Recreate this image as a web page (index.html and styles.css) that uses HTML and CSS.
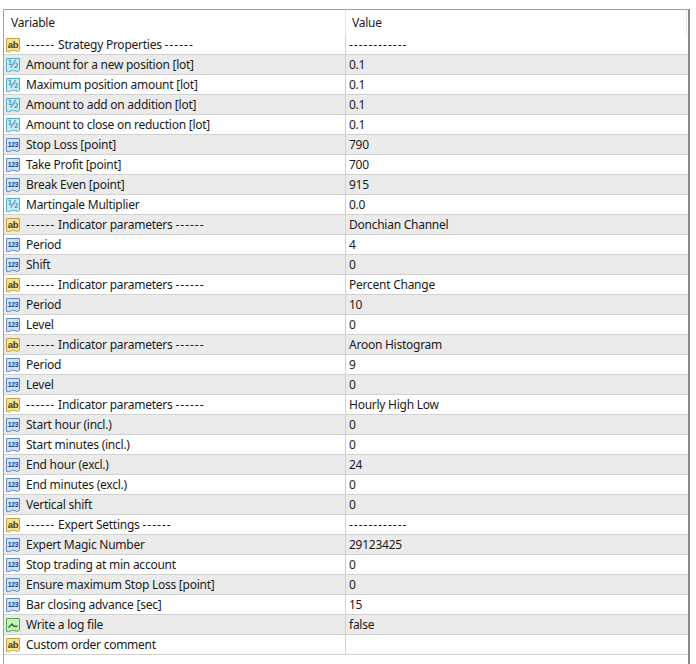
FILE: index.html
```html
<!DOCTYPE html>
<html>
<head>
<meta charset="utf-8">
<link rel="stylesheet" href="styles.css">
</head>
<body>
<svg class="defs" width="0" height="0" aria-hidden="true">
  <defs>
    <path id="shape" d="M1.5 1.5 H14.5 V13.2 Q12.5 15.2 10 13.8 Q7.5 12.4 5 14.2 Q3.2 15.4 1.5 14.3 Z"/>
    <symbol id="i-ab" viewBox="0 0 16 16">
      <use href="#shape" fill="#f7e39a" stroke="#c2a445" stroke-width="1"/>
      <text x="8" y="11" text-anchor="middle" font-family="Liberation Sans, sans-serif" font-size="9.5" font-weight="bold" fill="#4a3a10">ab</text>
    </symbol>
    <symbol id="i-half" viewBox="0 0 16 16">
      <use href="#shape" fill="#c6ecf6" stroke="#52acc8" stroke-width="1"/>
      <text x="8" y="11.4" text-anchor="middle" font-family="DejaVu Sans, sans-serif" font-size="11" fill="#1769a8">½</text>
    </symbol>
    <symbol id="i-num" viewBox="0 0 16 16">
      <use href="#shape" fill="#d2e2f6" stroke="#5c86c4" stroke-width="1"/>
      <text x="8" y="10.3" text-anchor="middle" font-family="Liberation Sans, sans-serif" font-size="6.8" font-weight="bold" fill="#1c3f85">123</text>
    </symbol>
    <symbol id="i-bool" viewBox="0 0 16 16">
      <use href="#shape" fill="#c9efc0" stroke="#52a548" stroke-width="1"/>
      <path d="M3.5 10.5 L7 7 L9 9.2 L12.5 9.2" fill="none" stroke="#23702a" stroke-width="1.4"/>
    </symbol>
  </defs>
</svg>
<div class="grid">
  <div class="head">
    <div class="hcell var">Variable</div>
    <div class="hcell val">Value</div>
  </div>
  <div class="row"><div class="cell var"><svg class="ic"><use href="#i-ab"/></svg><span class="dash">------</span>&nbsp;Strategy Properties&nbsp;<span class="dash">------</span></div><div class="cell val"><span class="dash">------------</span></div></div>
  <div class="row alt"><div class="cell var"><svg class="ic"><use href="#i-half"/></svg>Amount for a new position [lot]</div><div class="cell val">0.1</div></div>
  <div class="row"><div class="cell var"><svg class="ic"><use href="#i-half"/></svg>Maximum position amount [lot]</div><div class="cell val">0.1</div></div>
  <div class="row alt"><div class="cell var"><svg class="ic"><use href="#i-half"/></svg>Amount to add on addition [lot]</div><div class="cell val">0.1</div></div>
  <div class="row"><div class="cell var"><svg class="ic"><use href="#i-half"/></svg>Amount to close on reduction [lot]</div><div class="cell val">0.1</div></div>
  <div class="row alt"><div class="cell var"><svg class="ic"><use href="#i-num"/></svg>Stop Loss [point]</div><div class="cell val">790</div></div>
  <div class="row"><div class="cell var"><svg class="ic"><use href="#i-num"/></svg>Take Profit [point]</div><div class="cell val">700</div></div>
  <div class="row alt"><div class="cell var"><svg class="ic"><use href="#i-num"/></svg>Break Even [point]</div><div class="cell val">915</div></div>
  <div class="row"><div class="cell var"><svg class="ic"><use href="#i-half"/></svg>Martingale Multiplier</div><div class="cell val">0.0</div></div>
  <div class="row alt"><div class="cell var"><svg class="ic"><use href="#i-ab"/></svg><span class="dash">------</span>&nbsp;Indicator parameters&nbsp;<span class="dash">------</span></div><div class="cell val">Donchian Channel</div></div>
  <div class="row"><div class="cell var"><svg class="ic"><use href="#i-num"/></svg>Period</div><div class="cell val">4</div></div>
  <div class="row alt"><div class="cell var"><svg class="ic"><use href="#i-num"/></svg>Shift</div><div class="cell val">0</div></div>
  <div class="row"><div class="cell var"><svg class="ic"><use href="#i-ab"/></svg><span class="dash">------</span>&nbsp;Indicator parameters&nbsp;<span class="dash">------</span></div><div class="cell val">Percent Change</div></div>
  <div class="row alt"><div class="cell var"><svg class="ic"><use href="#i-num"/></svg>Period</div><div class="cell val">10</div></div>
  <div class="row"><div class="cell var"><svg class="ic"><use href="#i-num"/></svg>Level</div><div class="cell val">0</div></div>
  <div class="row alt"><div class="cell var"><svg class="ic"><use href="#i-ab"/></svg><span class="dash">------</span>&nbsp;Indicator parameters&nbsp;<span class="dash">------</span></div><div class="cell val">Aroon Histogram</div></div>
  <div class="row"><div class="cell var"><svg class="ic"><use href="#i-num"/></svg>Period</div><div class="cell val">9</div></div>
  <div class="row alt"><div class="cell var"><svg class="ic"><use href="#i-num"/></svg>Level</div><div class="cell val">0</div></div>
  <div class="row"><div class="cell var"><svg class="ic"><use href="#i-ab"/></svg><span class="dash">------</span>&nbsp;Indicator parameters&nbsp;<span class="dash">------</span></div><div class="cell val">Hourly High Low</div></div>
  <div class="row alt"><div class="cell var"><svg class="ic"><use href="#i-num"/></svg>Start hour (incl.)</div><div class="cell val">0</div></div>
  <div class="row"><div class="cell var"><svg class="ic"><use href="#i-num"/></svg>Start minutes (incl.)</div><div class="cell val">0</div></div>
  <div class="row alt"><div class="cell var"><svg class="ic"><use href="#i-num"/></svg>End hour (excl.)</div><div class="cell val">24</div></div>
  <div class="row"><div class="cell var"><svg class="ic"><use href="#i-num"/></svg>End minutes (excl.)</div><div class="cell val">0</div></div>
  <div class="row alt"><div class="cell var"><svg class="ic"><use href="#i-num"/></svg>Vertical shift</div><div class="cell val">0</div></div>
  <div class="row"><div class="cell var"><svg class="ic"><use href="#i-ab"/></svg><span class="dash">------</span>&nbsp;Expert Settings&nbsp;<span class="dash">------</span></div><div class="cell val"><span class="dash">------------</span></div></div>
  <div class="row alt"><div class="cell var"><svg class="ic"><use href="#i-num"/></svg>Expert Magic Number</div><div class="cell val">29123425</div></div>
  <div class="row"><div class="cell var"><svg class="ic"><use href="#i-num"/></svg>Stop trading at min account</div><div class="cell val">0</div></div>
  <div class="row alt"><div class="cell var"><svg class="ic"><use href="#i-num"/></svg>Ensure maximum Stop Loss [point]</div><div class="cell val">0</div></div>
  <div class="row"><div class="cell var"><svg class="ic"><use href="#i-num"/></svg>Bar closing advance [sec]</div><div class="cell val">15</div></div>
  <div class="row alt"><div class="cell var"><svg class="ic"><use href="#i-bool"/></svg>Write a log file</div><div class="cell val">false</div></div>
  <div class="row"><div class="cell var"><svg class="ic"><use href="#i-ab"/></svg>Custom order comment</div><div class="cell val"></div></div>
</div>
</body>
</html>
```
FILE: styles.css
```css
html, body {
  margin: 0;
  padding: 0;
  background: #ffffff;
}
body {
  font-family: "Noto Sans", "Open Sans", sans-serif;
  font-size: 12px;
  letter-spacing: -0.25px;
  color: #1b1b1b;
  overflow: hidden;
}
.defs {
  position: absolute;
  width: 0;
  height: 0;
}
.grid {
  margin: 9px 0 0 3px;
  width: 684px;
  border-top: 1px solid #a0a0a0;
  border-left: 1px solid #a0a0a0;
  border-right: 2px solid #8a8a8a;
  height: 660px;
}
.head {
  display: flex;
  height: 25px;
}
.hcell {
  display: flex;
  align-items: center;
  border-right: 1px solid #e6e6e6;
  padding-bottom: 1px;
  box-sizing: border-box;
}
.hcell.var {
  width: 342px;
  padding-left: 7px;
}
.hcell.val {
  flex: 1;
  padding-left: 6px;
  margin-right: 1px;
}
.row {
  display: flex;
  height: 20px;
  box-sizing: border-box;
  border-bottom: 1px solid #d2d2d2;
}
.row.alt {
  background: #ebebeb;
}
.cell {
  display: flex;
  align-items: center;
  white-space: nowrap;
  box-sizing: border-box;
}
.cell.var {
  width: 342px;
  border-right: 1px solid #d2d2d2;
  padding-left: 1px;
}
.cell.val {
  flex: 1;
  padding-left: 3px;
}
.dash {
  letter-spacing: 1px;
}
.ic {
  width: 16px;
  height: 16px;
  margin-right: 5px;
  flex: none;
}
```
